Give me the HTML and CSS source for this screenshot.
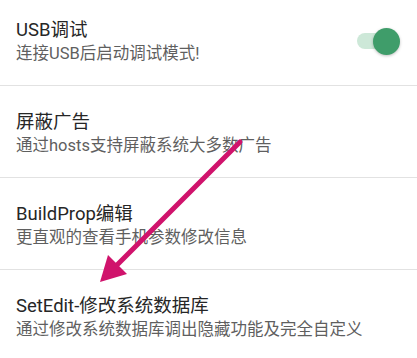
FILE: index.html
```html
<!DOCTYPE html>
<html lang="zh-CN">
<head>
    <meta charset="UTF-8">
    <meta name="viewport" content="width=device-width, initial-scale=1.0">
    <title>设置</title>
    <link rel="stylesheet" href="styles.css">
</head>
<body>
    <div class="list">
        <!-- USB调试 -->
        <div class="row">
            <div class="text">
                <p class="title">USB调试</p>
                <p class="sub">连接USB后启动调试模式!</p>
            </div>
            <div class="switch on">
                <span class="track"></span>
                <span class="thumb"></span>
            </div>
        </div>

        <div class="row">
            <div class="text">
                <p class="title">屏蔽广告</p>
                <p class="sub">通过hosts支持屏蔽系统大多数广告</p>
            </div>
        </div>

        <div class="row">
            <div class="text">
                <p class="title">BuildProp编辑</p>
                <p class="sub">更直观的查看手机参数修改信息</p>
            </div>
        </div>

        <div class="row">
            <div class="text">
                <p class="title">SetEdit-修改系统数据库</p>
                <p class="sub">通过修改系统数据库调出隐藏功能及完全自定义</p>
            </div>
        </div>
    </div>

    <!-- 标注箭头 -->
    <svg class="arrow" width="417" height="358" viewBox="0 0 417 358">
        <line x1="240" y1="142" x2="116" y2="266" stroke="#d0136c" stroke-width="5" stroke-linecap="round"/>
        <polygon points="100,282 108,255 127,274" fill="#d0136c"/>
    </svg>
</body>
</html>
```

FILE: styles.css
```css
body {
    margin: 0;
    background: #ffffff;
    font-family: Roboto, "Noto Sans CJK SC", sans-serif;
    overflow: hidden;
}
.list {
    margin-top: -6px;
}
.row {
    display: flex;
    align-items: center;
    height: 92px;
    padding: 4px 17px 0 16px;
    box-sizing: border-box;
    border-bottom: 1px solid #e2e2e2;
}
.row:last-child {
    border-bottom: none;
}
.text {
    flex: 1;
}
.title {
    margin: 0;
    font-size: 18.5px;
    line-height: 23px;
    color: #262626;
}
.sub {
    margin: 0;
    font-size: 16.5px;
    line-height: 23px;
    color: #5f5f5f;
}
.switch {
    position: relative;
    width: 43px;
    height: 27px;
}
.switch .track {
    position: absolute;
    left: 0;
    top: 5px;
    width: 40px;
    height: 16px;
    border-radius: 8px;
    background: #cde8d8;
}
.switch .thumb {
    position: absolute;
    right: 0;
    top: 0;
    width: 27px;
    height: 27px;
    border-radius: 50%;
    background: #3f9d6a;
    box-shadow: 0 1px 3px rgba(0, 0, 0, 0.25);
}
.arrow {
    position: absolute;
    left: 0;
    top: 0;
    pointer-events: none;
}
```
